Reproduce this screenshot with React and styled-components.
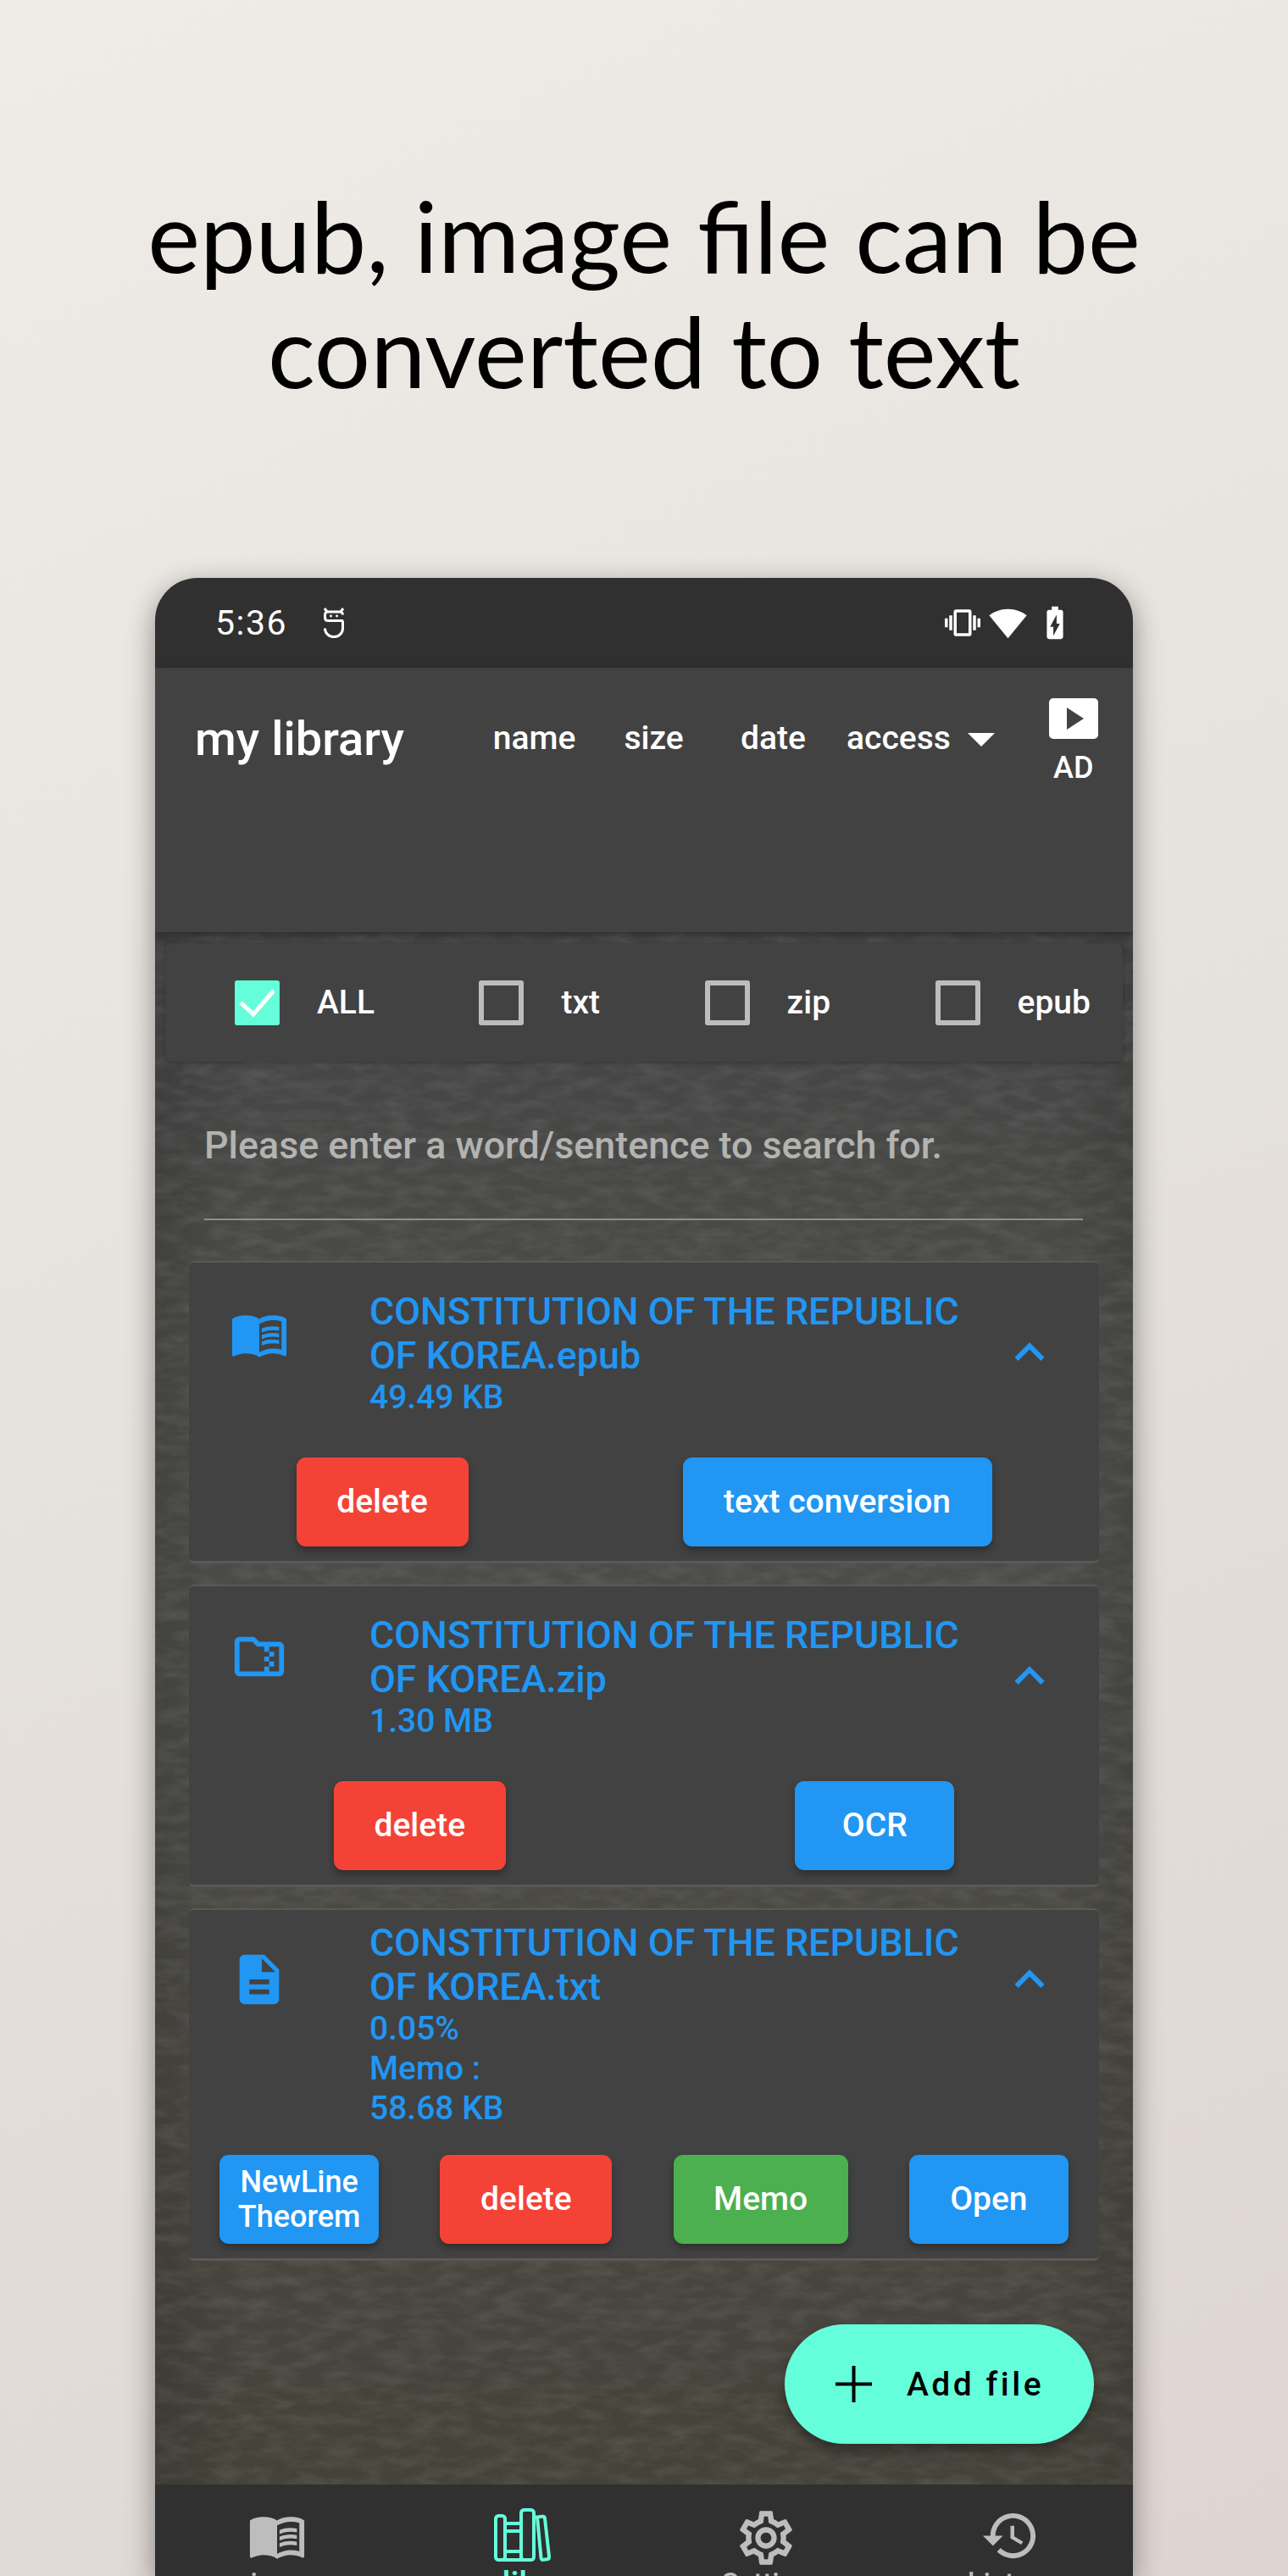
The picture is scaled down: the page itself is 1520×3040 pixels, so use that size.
import React from "react";
import styled, { createGlobalStyle } from "styled-components";

const Global = createGlobalStyle`
  html, body { margin: 0; padding: 0; }
  * { box-sizing: border-box; }
  body { font-family: Roboto, "Liberation Sans", sans-serif; }
`;

const noise = encodeURIComponent(
  `<svg xmlns="http://www.w3.org/2000/svg" width="1154" height="1900"><filter id="n" x="0" y="0" width="100%" height="100%"><feTurbulence type="fractalNoise" baseFrequency="0.03 0.08" numOctaves="4" seed="7"/><feColorMatrix values="0 0 0 0 1 0 0 0 0 1 0 0 0 0 1 0.16 0 0 0 -0.06"/></filter><rect width="1154" height="1900" filter="url(#n)"/></svg>`
);

const PATHS = {
  book: [
    "M21 5c-1.11-.35-2.33-.5-3.5-.5-1.95 0-4.05.4-5.5 1.5-1.45-1.1-3.55-1.5-5.5-1.5S2.45 4.9 1 6v14.65c0 .25.25.5.5.5.1 0 .15-.05.25-.05C3.1 20.45 5.05 20 6.5 20c1.95 0 4.05.4 5.5 1.5 1.35-.85 3.8-1.5 5.5-1.5 1.65 0 3.35.3 4.75 1.05.1.05.15.05.25.05.25 0 .5-.25.5-.5V6c-.6-.45-1.25-.75-2-1zm0 13.5c-1.1-.35-2.3-.5-3.5-.5-1.7 0-4.15.65-5.5 1.5V8c1.35-.85 3.8-1.5 5.5-1.5 1.2 0 2.4.15 3.5.5v11.5z",
    "M17.5 10.5c.88 0 1.73.09 2.5.26V9.24c-.79-.15-1.64-.24-2.5-.24-1.7 0-3.24.29-4.5.83v1.66c1.13-.64 2.7-.99 4.5-.99zM13 12.49v1.66c1.13-.64 2.7-.99 4.5-.99.88 0 1.73.09 2.5.26V11.9c-.79-.15-1.64-.24-2.5-.24-1.7 0-3.24.3-4.5.83zM17.5 14.33c-1.7 0-3.24.29-4.5.83v1.66c1.13-.64 2.7-.99 4.5-.99.88 0 1.73.09 2.5.26v-1.52c-.79-.16-1.64-.24-2.5-.24z",
  ],
  zip: ["M20 6h-8l-2-2H4c-1.1 0-2 .9-2 2v12c0 1.1.9 2 2 2h16c1.1 0 2-.9 2-2V8c0-1.1-.9-2-2-2zm-4 10h2v-2h-2v-2h2v-2h-2V8h4v10h-4v-2zm0 0h-2v2H4V6h5.17l2 2H14v2h2v2h-2v2h2v2z"],
  doc: ["M14 2H6c-1.1 0-1.99.9-1.99 2L4 20c0 1.1.89 2 1.99 2H18c1.1 0 2-.9 2-2V8l-6-6zm2 16H8v-2h8v2zm0-4H8v-2h8v2zm-3-5V3.5L18.5 9H13z"],
  up: ["M12 8l-6 6 1.41 1.41L12 10.83l4.59 4.58L18 14z"],
  vibrate: ["M0 15h2V9H0v6zm3 2h2V7H3v10zm19-8v6h2V9h-2zm-3 8h2V7h-2v10zM16.5 3h-9C6.67 3 6 3.67 6 4.5v15c0 .83.67 1.5 1.5 1.5h9c.83 0 1.5-.67 1.5-1.5v-15c0-.83-.67-1.5-1.5-1.5zM16 19H8V5h8v14z"],
  wifi: ["M12 21.5 23.8 7C23.3 6.6 18.8 3 12 3S.7 6.6.2 7z"],
  battery: ["M15.67 4H14V2h-4v2H8.33C7.6 4 7 4.6 7 5.33v15.33C7 21.4 7.6 22 8.33 22h7.33c.74 0 1.34-.6 1.34-1.33V5.33C17 4.6 16.4 4 15.67 4zM11 20v-5.5H9L13 7v5.5h2L11 20z"],
  settings: ["M19.43 12.98c.04-.32.07-.64.07-.98 0-.34-.03-.66-.07-.98l2.11-1.65c.19-.15.24-.42.12-.64l-2-3.46c-.09-.16-.26-.25-.44-.25-.06 0-.12.01-.17.03l-2.49 1c-.52-.4-1.08-.73-1.69-.98l-.38-2.65C14.46 2.18 14.25 2 14 2h-4c-.25 0-.46.18-.49.42l-.38 2.65c-.61.25-1.17.59-1.69.98l-2.49-1c-.06-.02-.12-.03-.18-.03-.17 0-.34.09-.43.25l-2 3.46c-.13.22-.07.49.12.64l2.11 1.65c-.04.32-.07.65-.07.98 0 .33.03.66.07.98l-2.11 1.65c-.19.15-.24.42-.12.64l2 3.46c.09.16.26.25.44.25.06 0 .12-.01.17-.03l2.49-1c.52.4 1.08.73 1.69.98l.38 2.65c.03.24.24.42.49.42h4c.25 0 .46-.18.49-.42l.38-2.65c.61-.25 1.17-.59 1.69-.98l2.49 1c.06.02.12.03.18.03.17 0 .34-.09.43-.25l2-3.46c.12-.22.07-.49-.12-.64l-2.11-1.65zm-1.98-1.71c.04.31.05.52.05.73 0 .21-.02.43-.05.73l-.14 1.13.89.7 1.08.84-.7 1.21-1.27-.51-1.04-.42-.9.68c-.43.32-.84.56-1.25.73l-1.06.43-.16 1.13-.2 1.35h-1.4l-.19-1.35-.16-1.13-1.06-.43c-.43-.18-.83-.41-1.23-.71l-.91-.7-1.06.43-1.27.51-.7-1.21 1.08-.84.89-.7-.14-1.13c-.03-.31-.05-.54-.05-.74s.02-.43.05-.73l.14-1.13-.89-.7-1.08-.84.7-1.21 1.27.51 1.04.42.9-.68c.43-.32.84-.56 1.25-.73l1.06-.43.16-1.13.2-1.35h1.39l.19 1.35.16 1.13 1.06.43c.43.18.83.41 1.23.71l.91.7 1.06-.43 1.27-.51.7 1.21-1.07.85-.89.7.14 1.13zM12 8c-2.21 0-4 1.79-4 4s1.79 4 4 4 4-1.79 4-4-1.79-4-4-4zm0 6c-1.1 0-2-.9-2-2s.9-2 2-2 2 .9 2 2-.9 2-2 2z"],
  history: ["M13 3c-4.97 0-9 4.03-9 9H1l3.89 3.89.07.14L9 12H6c0-3.87 3.13-7 7-7s7 3.13 7 7-3.13 7-7 7c-1.93 0-3.68-.79-4.94-2.06l-1.42 1.42C8.27 19.99 10.51 21 13 21c4.97 0 9-4.03 9-9s-4.03-9-9-9zm-1 5v5l4.28 2.54.72-1.21-3.5-2.08V8H12z"],
};

const Icon = ({ name, size, color }) => (
  <svg width={size} height={size} viewBox="0 0 24 24" fill={color} style={{ display: "block", flexShrink: 0 }}>
    {PATHS[name].map((d) => (
      <path key={d} d={d} />
    ))}
  </svg>
);

const BooksIcon = () => (
  <svg width="72" height="68" viewBox="0 0 72 68" fill="none" stroke="#64ffda" strokeWidth="4" style={{ display: "block" }}>
    <rect x="5" y="12" width="11" height="52" rx="3.5" />
    <rect x="16" y="21" width="19" height="43" />
    <path d="M16 30h19M16 54h19" />
    <rect x="35" y="5" width="15" height="59" rx="3.5" />
    <path d="M54 13.5l6-.8c1.6-.2 2.8.7 3 2.2l5 45c.2 1.8-.7 3.2-2.4 3.4l-4 .5c-1.8.2-2.9-.8-3.1-2.4z" />
  </svg>
);

const RobotIcon = () => (
  <svg width="26" height="38" viewBox="0 0 26 38" fill="none" stroke="#fff" strokeWidth="3" style={{ display: "block" }}>
    <path d="M2 2l3 4M24 2l-3 4" />
    <path d="M24 16.5H6c-2.2 0-3.5-1.5-3.5-4v-3C2.5 7.5 4 6 6 6h14c2 0 3.5 1.5 3.5 3.5" />
    <path d="M23.5 16.5v9c0 5.5-4.5 10-10.5 10S2.5 31 2.5 25.5" />
    <circle cx="9.5" cy="11" r="1.4" fill="#fff" stroke="none" />
    <circle cx="16.5" cy="11" r="1.4" fill="#fff" stroke="none" />
  </svg>
);

const FILTERS = [
  { label: "ALL", on: true },
  { label: "txt" },
  { label: "zip" },
  { label: "epub" },
];

const FILES = [
  {
    icon: "book",
    name: "CONSTITUTION OF THE REPUBLIC OF KOREA.epub",
    lines: ["49.49 KB"],
    top: 34,
    bottom: 47,
    iconTop: 51,
    chevronTop: 73,
    buttons: [
      { label: "delete", color: "#f44336", width: 203 },
      { label: "text conversion", color: "#2196f3", width: 365 },
    ],
  },
  {
    icon: "zip",
    name: "CONSTITUTION OF THE REPUBLIC OF KOREA.zip",
    lines: ["1.30 MB"],
    top: 34,
    bottom: 47,
    iconTop: 50,
    chevronTop: 73,
    buttons: [
      { label: "delete", color: "#f44336", width: 203 },
      { label: "OCR", color: "#2196f3", width: 188 },
    ],
  },
  {
    icon: "doc",
    name: "CONSTITUTION OF THE REPUBLIC OF KOREA.txt",
    lines: ["0.05%", "Memo :", "58.68 KB"],
    top: 15,
    bottom: 31,
    iconTop: 49,
    chevronTop: 49,
    buttons: [
      { label: "NewLine Theorem", color: "#2196f3", width: 188, small: true },
      { label: "delete", color: "#f44336", width: 203 },
      { label: "Memo", color: "#4caf50", width: 206 },
      { label: "Open", color: "#2196f3", width: 188 },
    ],
  },
];

const NAV = [
  { label: "viewer", icon: "book", size: 70 },
  { label: "my library", books: true, active: true },
  { label: "Setting", icon: "settings", size: 76 },
  { label: "history", icon: "history", size: 71 },
];

export default function App() {
  return (
    <>
      <Global />
      <Page>
        <Headline>
          epub, image file can be
          <br />
          converted to text
        </Headline>
        <Phone>
          <StatusBar>
            <StatusLeft>
              <Clock>5:36</Clock>
              <RobotIcon />
            </StatusLeft>
            <StatusRight>
              <Icon name="vibrate" size={42} color="#fff" />
              <Icon name="wifi" size={45} color="#fff" />
              <Icon name="battery" size={46} color="#fff" />
            </StatusRight>
          </StatusBar>
          <AppBar>
            <AppTitle>my library</AppTitle>
            <SortCell>name</SortCell>
            <SortCell>size</SortCell>
            <SortCell>date</SortCell>
            <SortDropdown>
              access
              <Caret />
            </SortDropdown>
            <AdButton>
              <AdBadge>
                <AdPlay />
              </AdBadge>
              <AdLabel>AD</AdLabel>
            </AdButton>
          </AppBar>
          <Content>
            <FilterCard>
              {FILTERS.map((f) => (
                <FilterItem key={f.label}>
                  <CheckBox $on={f.on}>
                    {f.on && (
                      <svg width="53" height="53" viewBox="0 0 53 53" fill="none" stroke="#fff" strokeWidth="5">
                        <path d="M7 26l15 14 24-28" />
                      </svg>
                    )}
                  </CheckBox>
                  <FilterLabel>{f.label}</FilterLabel>
                </FilterItem>
              ))}
            </FilterCard>
            <SearchBox>Please enter a word/sentence to search for.</SearchBox>
            <FileList>
              {FILES.map((file) => (
                <FileCard key={file.icon}>
                  <FileHead $top={file.top} $bottom={file.bottom}>
                    <FileIcon $top={file.iconTop - file.top}>
                      <Icon name={file.icon} size={70} color="#2196f3" />
                    </FileIcon>
                    <FileInfo>
                      <FileName>{file.name}</FileName>
                      {file.lines.map((line) => (
                        <FileMeta key={line}>{line}</FileMeta>
                      ))}
                    </FileInfo>
                    <Chevron $top={file.chevronTop - file.top}>
                      <Icon name="up" size={70} color="#2196f3" />
                    </Chevron>
                  </FileHead>
                  <ButtonRow>
                    {file.buttons.map((b) => (
                      <ActionButton key={b.label} $color={b.color} $width={b.width} $small={b.small}>
                        {b.label}
                      </ActionButton>
                    ))}
                  </ButtonRow>
                </FileCard>
              ))}
            </FileList>
            <Fab>
              <svg width="45" height="45" viewBox="0 0 45 45" stroke="#000" strokeWidth="4">
                <path d="M22.5 1v43M1 22.5h43" />
              </svg>
              <FabLabel>Add file</FabLabel>
            </Fab>
          </Content>
          <BottomNav>
            {NAV.map((n) => (
              <NavItem key={n.label}>
                <NavIconSlot>
                  {n.books ? <BooksIcon /> : <Icon name={n.icon} size={n.size} color="#bdbdbd" />}
                </NavIconSlot>
                <NavLabel $active={n.active}>{n.label}</NavLabel>
              </NavItem>
            ))}
          </BottomNav>
        </Phone>
      </Page>
    </>
  );
}

const Page = styled.div`
  width: 1520px;
  height: 3040px;
  overflow: hidden;
  display: flex;
  flex-direction: column;
  align-items: center;
  background: linear-gradient(155deg, #efece8 0%, #e5e1dc 50%, #ded5d1 100%);
`;

const Headline = styled.h1`
  margin: 209px 0 201px;
  font-family: Lato, "Open Sans", sans-serif;
  font-weight: 400;
  font-size: 117px;
  line-height: 136px;
  text-align: center;
  color: #000;
  white-space: nowrap;
`;

const Phone = styled.div`
  width: 1154px;
  flex: 1;
  min-height: 0;
  display: flex;
  flex-direction: column;
  border-radius: 50px 50px 0 0;
  overflow: hidden;
  box-shadow: 0 10px 34px rgba(0, 0, 0, 0.4);
`;

const StatusBar = styled.div`
  height: 106px;
  flex-shrink: 0;
  display: flex;
  align-items: center;
  justify-content: space-between;
  padding: 0 69px 0 71px;
  background: #303030;
  color: #fff;
`;

const StatusLeft = styled.div`
  display: flex;
  align-items: center;
  gap: 42px;
`;

const Clock = styled.span`
  font-size: 41px;
  letter-spacing: 1.5px;
`;

const StatusRight = styled.div`
  display: flex;
  align-items: center;
  gap: 10px;
`;

const AppBar = styled.div`
  height: 312px;
  flex-shrink: 0;
  display: flex;
  align-items: flex-start;
  padding: 36px 0 0 47px;
  background: #424242;
  color: #fff;
  box-shadow: 0 4px 10px rgba(0, 0, 0, 0.4);
  position: relative;
  z-index: 1;
`;

const AppTitle = styled.div`
  width: 330px;
  font-size: 56px;
  font-weight: 500;
  line-height: 96px;
`;

const SortCell = styled.div`
  width: 141px;
  margin-top: 24px;
  text-align: center;
  font-size: 39px;
  font-weight: 500;
  line-height: 46px;
`;

const SortDropdown = styled(SortCell)`
  width: auto;
  margin-left: 16px;
  display: flex;
  align-items: center;
  gap: 20px;
`;

const Caret = styled.span`
  width: 0;
  height: 0;
  border-left: 16px solid transparent;
  border-right: 16px solid transparent;
  border-top: 16px solid #fff;
  margin-top: 4px;
`;

const AdButton = styled.div`
  margin-left: 64px;
  width: 58px;
  display: flex;
  flex-direction: column;
  align-items: center;
`;

const AdBadge = styled.div`
  width: 58px;
  height: 48px;
  border-radius: 5px;
  background: #fff;
  display: flex;
  align-items: center;
  justify-content: center;
`;

const AdPlay = styled.span`
  width: 0;
  height: 0;
  border-top: 13px solid transparent;
  border-bottom: 13px solid transparent;
  border-left: 20px solid #424242;
  margin-left: 4px;
`;

const AdLabel = styled.div`
  margin-top: 12px;
  font-size: 36px;
  font-weight: 500;
  line-height: 44px;
`;

const Content = styled.div`
  flex: 1;
  min-height: 0;
  position: relative;
  display: flex;
  flex-direction: column;
  background-color: #4b4a46;
  background-image: url("data:image/svg+xml,${noise}"),
    linear-gradient(90deg, rgba(0, 0, 0, 0.12) 0%, rgba(0, 0, 0, 0) 8%, rgba(0, 0, 0, 0) 92%, rgba(0, 0, 0, 0.1) 100%),
    linear-gradient(180deg, #434443 0%, #4c4d4a 30%, #4a4944 65%, #45423a 100%);
`;

const FilterCard = styled.div`
  margin: 13px 12px 0;
  height: 140px;
  flex-shrink: 0;
  display: flex;
  align-items: center;
  justify-content: space-between;
  padding: 0 38px 0 82px;
  background: #424242;
  border-radius: 8px;
  box-shadow: 0 1px 4px rgba(0, 0, 0, 0.3);
`;

const FilterItem = styled.div`
  display: flex;
  align-items: center;
  gap: 44px;
`;

const CheckBox = styled.div`
  width: 53px;
  height: 53px;
  border-radius: 3px;
  background: ${(p) => (p.$on ? "#64ffda" : "transparent")};
  border: ${(p) => (p.$on ? "none" : "6px solid #bdbdbd")};
`;

const FilterLabel = styled.span`
  color: #fff;
  font-size: 39px;
  font-weight: 500;
`;

const SearchBox = styled.div`
  margin: 0 59px 0 58px;
  padding: 73px 0 60px;
  font-size: 44.8px;
  line-height: 52px;
  font-weight: 500;
  color: #b3b3b1;
  border-bottom: 2px solid #8f8f8c;
`;

const FileList = styled.div`
  margin: 48px 40px 0;
  display: flex;
  flex-direction: column;
  gap: 25px;
`;

const FileCard = styled.div`
  background: #424242;
  border-radius: 6px;
  border-top: 2px solid #595957;
  border-bottom: 3px solid #595957;
  padding-bottom: 17px;
`;

const FileHead = styled.div`
  display: flex;
  align-items: flex-start;
  padding: ${(p) => p.$top - 2}px 47px ${(p) => p.$bottom}px 48px;
`;

const FileIcon = styled.div`
  width: 70px;
  margin-top: ${(p) => p.$top}px;
  flex-shrink: 0;
`;

const FileInfo = styled.div`
  margin-left: 95px;
  flex: 1;
  color: #2196f3;
  font-weight: 500;
`;

const FileName = styled.div`
  font-size: 44.8px;
  line-height: 52px;
`;

const FileMeta = styled.div`
  font-size: 39px;
  line-height: 47px;
`;

const Chevron = styled.div`
  width: 70px;
  margin-top: ${(p) => p.$top}px;
  margin-left: 30px;
  flex-shrink: 0;
`;

const ButtonRow = styled.div`
  display: flex;
  justify-content: space-around;
`;

const ActionButton = styled.div`
  width: ${(p) => p.$width}px;
  height: 105px;
  display: flex;
  align-items: center;
  justify-content: center;
  text-align: center;
  padding: 0 ${(p) => (p.$small ? 24 : 10)}px;
  background: ${(p) => p.$color};
  color: #fff;
  font-size: ${(p) => (p.$small ? 36 : 39)}px;
  line-height: 41px;
  font-weight: 500;
  border-radius: 11px;
  box-shadow: 0 5px 8px rgba(0, 0, 0, 0.3);
`;

const Fab = styled.div`
  position: absolute;
  right: 46px;
  bottom: 48px;
  width: 365px;
  height: 141px;
  display: flex;
  align-items: center;
  gap: 40px;
  padding-left: 59px;
  border-radius: 71px;
  background: #64ffda;
  box-shadow: 0 8px 14px rgba(0, 0, 0, 0.35);
`;

const FabLabel = styled.span`
  color: #000;
  font-size: 39px;
  font-weight: 500;
  letter-spacing: 3.5px;
`;

const BottomNav = styled.div`
  height: 108px;
  flex-shrink: 0;
  display: grid;
  grid-template-columns: repeat(4, 1fr);
  background: #303030;
  overflow: hidden;
`;

const NavItem = styled.div`
  display: flex;
  flex-direction: column;
  align-items: center;
`;

const NavIconSlot = styled.div`
  height: 94px;
  padding-top: 25px;
  display: flex;
  justify-content: center;
  flex-shrink: 0;
`;

const NavLabel = styled.div`
  font-size: ${(p) => (p.$active ? 39 : 33)}px;
  font-weight: 500;
  line-height: 46px;
  color: ${(p) => (p.$active ? "#64ffda" : "#bdbdbd")};
  white-space: nowrap;
`;
